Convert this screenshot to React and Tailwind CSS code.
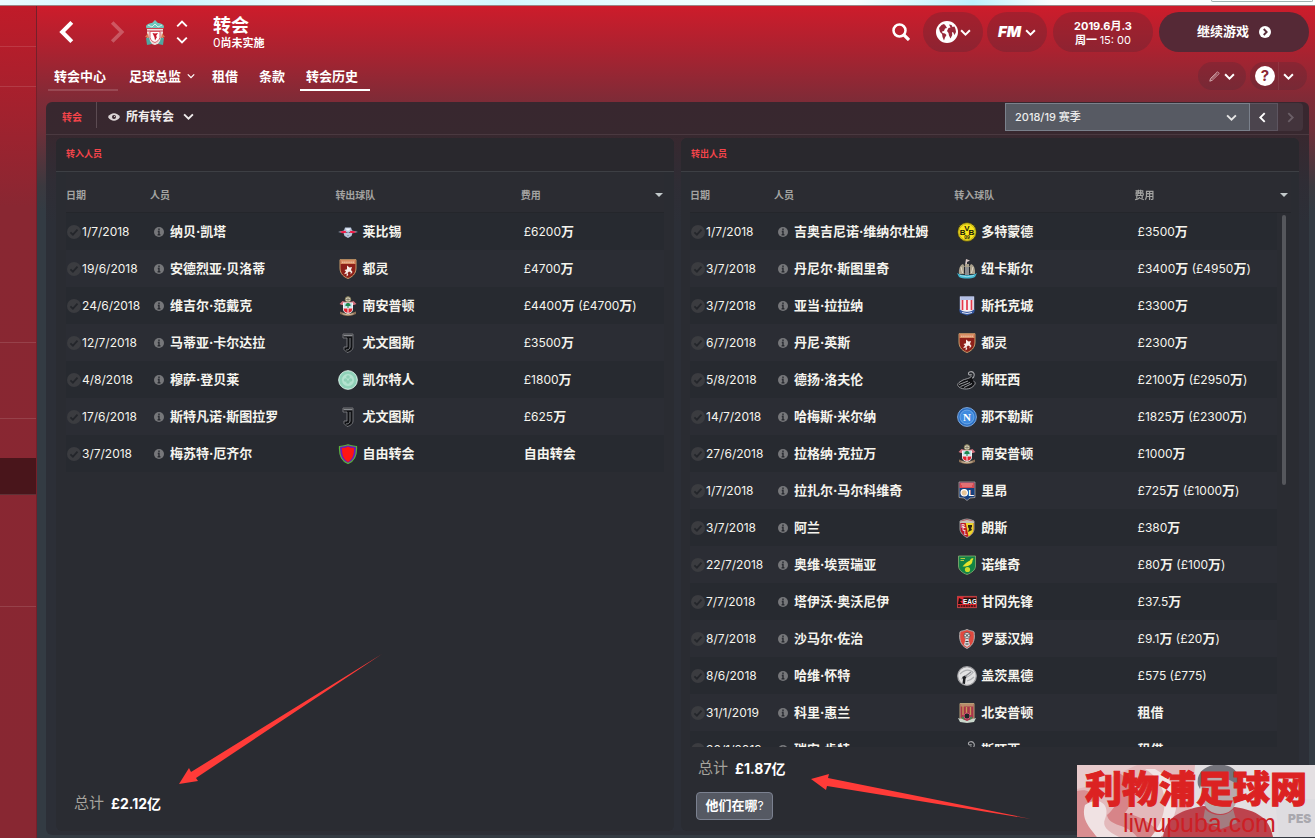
import React from "react";

/* ---------- icons ---------- */

function Chevron({ dir = "down", className = "w-[10px] h-[10px]", weight = 2 }) {
  const paths = {
    down: "M1 3l4 4 4-4",
    up: "M1 7l4-4 4 4",
    left: "M7 1L3 5l4 4",
    right: "M3 1l4 4-4 4",
  };
  return (
    <svg viewBox="0 0 10 10" className={className} fill="none" stroke="currentColor" strokeWidth={weight} aria-hidden="true">
      <path d={paths[dir]} />
    </svg>
  );
}

function CheckBadge() {
  return (
    <svg viewBox="0 0 14 14" className="h-[14px] w-[14px] shrink-0" aria-hidden="true">
      <circle cx="7" cy="7" r="7" fill="#3b3c40" />
      <path d="M3.4 7.4l2.5 2.3 4.6-5" fill="none" stroke="#24262b" strokeWidth="1.8" />
    </svg>
  );
}

function InfoBadge() {
  return (
    <svg viewBox="0 0 10 10" className="h-[10px] w-[10px] shrink-0" aria-hidden="true">
      <circle cx="5" cy="5" r="5" fill="#76777a" />
      <path d="M5 1.6v1.6M3.8 4.5h1.2v3.2M3.6 7.8h2.8" stroke="#292b31" strokeWidth="1.4" fill="none" />
    </svg>
  );
}

function LiverpoolCrest() {
  return (
    <svg viewBox="0 0 20 26" className="h-[26px] w-[20px]" aria-hidden="true">
      <path d="M1 7c0-3 4-4 6-4l3-3 3 3c2 0 6 1 6 4l-1 2H2z" fill="#6fc7bd" />
      <path d="M3 5l4 2 3-3 3 3 4-2" stroke="#d8efe9" fill="none" />
      <path d="M2 8h16v11c-2 5-6 5-8 6-3-1-6-1-8-6z" fill="#eedddb" />
      <path d="M2 8.500h16M2 11h16" stroke="#cf4350" />
      <path d="M5 11.500h10v6c-1 3-3 4-5 5-3-1-4-2-5-5z" fill="#fff" stroke="#d23a49" strokeWidth=".8" />
      <path d="M7.500 13l2.500.6 3-.6-2 3 1 1-2 3.500-.6-3.500z" fill="#c5182b" />
      <path d="M1 18l3-1 1 4 2 3-5 1zM19 18l-3-1-1 4-2 3 5 1z" fill="#4fa79f" />
      <path d="M0 17l3-4 1 5zM20 17l-3-4-1 5z" fill="#d97b52" />
    </svg>
  );
}

function CrestFrame({ children }) {
  return (
    <svg viewBox="0 0 20 20" className="h-[20px] w-[20px] shrink-0" fontFamily="Liberation Sans, sans-serif" fontWeight="bold" textAnchor="middle" aria-hidden="true">
      {children}
    </svg>
  );
}

const crests = {
  leipzig: (
    <CrestFrame>
      <path d="M0 10l6-1.500L7 5.500h6l1 3 6 1.500-5.500 1-1 3-3.500 2-3.500-2-1-3z" fill="#b9c6dc" />
      <path d="M2 9.600l5.500-.8 1 2-4.500.4zM18 9.600l-5.500-.8-1 2 4.500.4z" fill="#f01a45" />
      <path d="M7.500 6.500h5l-1.500 2H9z" fill="#eef3fa" />
      <path d="M8.500 10.500h.8M10.800 10.500h.8" stroke="#283046" />
      <path d="M9 13h2l-1 1.500z" fill="#7c8aa2" />
    </CrestFrame>
  ),
  torino: (
    <CrestFrame>
      <path d="M2 .7h16v8.300c0 6-4 9-8 10.500C6 18 2 15 2 9z" fill="#8d2019" stroke="#c99d6a" />
      <path d="M2.500 1h15v4h-15z" fill="#d98c62" />
      <path d="M4 3.200h12" stroke="#f1cfb2" strokeDasharray="1.500 .6" />
      <path d="M9 6.500l2.500 2L14 8l-1 3 1.500 2-2 2.500.3-2.300-1.800-.7-1.500 1.500.8 2-1.800 1.500.3-3-2.800.8L8 12.500 6.500 11l2.500-.8z" fill="#f8efe9" />
    </CrestFrame>
  ),
  southampton: (
    <CrestFrame>
      <circle cx="10" cy="3.400" r="2.700" fill="#e4ddc8" stroke="#8a815c" />
      <path d="M10 1.500v3.800M8 3.400h4" stroke="#55503e" strokeWidth=".6" />
      <path d="M1.500 8l3-3 3.500 1h4l3.500-1 3 3-2.500 1h-12z" fill="#d0707c" />
      <path d="M5 6.500h10V13c0 3-3 4.500-5 5.500-2-1-5-2.500-5-5.500z" fill="#f3f5f6" />
      <path d="M6 7h8v4.500H6z" fill="#bfe3ec" />
      <path d="M10 6.800c2 .6 3 2 2.500 3.200h-2v2h-1v-2h-2C7 8.800 8 7.400 10 6.800z" fill="#1f874e" />
      <path d="M5.500 12.500h4v4.500l-3-1.500zM14.500 12.500h-4v4.500l3-1.500z" fill="#e0222f" />
      <path d="M2 15.500l3 1q5 2.500 10 0l3-1v2.500l-4 1.500q-4 1-8 0l-4-1.500z" fill="#8a6f55" />
      <path d="M4.500 17.800q5.500 2 11 0" stroke="#e3d3b4" strokeWidth=".8" fill="none" />
    </CrestFrame>
  ),
  juventus: (
    <CrestFrame>
      <path d="M5 1h10v13c0 3-3 5-6 5.500l-3-3V14h3V5H5z" fill="#101114" stroke="#85878b" strokeWidth=".8" />
      <path d="M5.500 2.500h9" stroke="#8a8c90" strokeWidth="1.600" />
      <path d="M12 5v9c0 2-2 3-4 3" fill="none" stroke="#9c9ea2" strokeWidth=".8" />
    </CrestFrame>
  ),
  celtic: (
    <CrestFrame>
      <circle cx="10" cy="10" r="9.300" fill="#8fd2b9" stroke="#d9f3e8" />
      <circle cx="10" cy="10" r="6.500" fill="#b4e3d0" stroke="#8fcfb5" strokeWidth=".8" />
      <g fill="#8fd0b6">
        <circle cx="10" cy="7" r="1.800" />
        <circle cx="7.500" cy="10" r="1.800" />
        <circle cx="12.500" cy="10" r="1.800" />
        <circle cx="10" cy="12" r="1.800" />
      </g>
    </CrestFrame>
  ),
  free: (
    <CrestFrame>
      <path d="M1.500 2.500Q7 2 10 .8q3 1.200 8.500 1.700c.5 9-2 14.500-8.500 17C3.500 17 1 11.500 1.500 2.500z" fill="#6b1fb8" stroke="#59b23b" strokeWidth="1.200" />
      <path d="M4 4q4 0 6-1.500Q12 4 16 4c.2 7.500-2 11.700-6 13.900C6 15.700 3.800 11.500 4 4z" fill="#ff1512" />
    </CrestFrame>
  ),
  dortmund: (
    <CrestFrame>
      <circle cx="10" cy="10" r="9.400" fill="#f9e41c" stroke="#2d2b12" strokeWidth=".8" />
      <circle cx="10" cy="10" r="8.200" fill="none" stroke="#8a7f14" strokeWidth=".5" />
      <text x="5.600" y="12.800" fontSize="8" fill="#15150d">B</text>
      <text x="10" y="9.400" fontSize="8" fill="#15150d">V</text>
      <text x="14.400" y="12.800" fontSize="8" fill="#15150d">B</text>
      <text x="10" y="17" fontSize="5" fill="#15150d">09</text>
    </CrestFrame>
  ),
  newcastle: (
    <CrestFrame>
      <path d="M9 0l4 1.500L10 3v3H8z" fill="#d8c7c5" />
      <path d="M2 15c-.5-5 1-9 4-10l2 3V5h4v3l2-3c3 1 4.500 5 4 10z" fill="#a9a08c" />
      <path d="M7 8h6v6c-1 2-2 2-3 3-1-1-2-1-3-3z" fill="#24262b" />
      <path d="M9 8v8M11 8v8" stroke="#f5f5f5" />
      <path d="M0 14c4 3 16 3 20 0l-2 4c-4 2-12 2-16 0z" fill="#41b7d0" />
      <path d="M3 16.500q7 2.500 14 0" stroke="#bfe8f0" strokeWidth=".7" fill="none" />
      <path d="M4 8l1.500 6M16 8l-1.500 6" stroke="#e4dccb" />
    </CrestFrame>
  ),
  stoke: (
    <CrestFrame>
      <path d="M3 .5h14V14l-2 2H5l-2-2z" fill="#f7f1f3" stroke="#8b98c2" strokeWidth=".6" />
      <path d="M5.500 4v10M10 4v10M14.500 4v10" stroke="#e4394b" strokeWidth="1.700" />
      <path d="M3.500 1h13v3h-13z" fill="#b3bfe4" />
      <path d="M2 13c3 2 5 3 8 3s5-1 8-3l-1 4-7 2.500L3 17z" fill="#3457a2" />
      <path d="M5 16.500q5 2 10 0" stroke="#dfe6f5" fill="none" />
    </CrestFrame>
  ),
  swansea: (
    <CrestFrame>
      <path d="M12.500 9.500c4-1 5.500-3.500 4.500-6-1.500-3-6-2-5.500.5.500 1.500 2.500 1 3 .3" fill="none" stroke="#a6a7aa" strokeWidth="1.100" />
      <path d="M14 5.500c1 2.500-4 3-8 4.500L2 12.500c-2 2-1.500 3 0 4.500 4 3 11 2.500 14-.5 3-2.500 2.500-4.500.5-5.500" fill="#101114" stroke="#a6a7aa" strokeWidth=".9" />
      <path d="M2 14.500l9-3.500M3.500 16.500l9.500-4M7 17.500l8-4" stroke="#bdbec1" strokeWidth=".8" />
    </CrestFrame>
  ),
  napoli: (
    <CrestFrame>
      <circle cx="10" cy="10" r="9.400" fill="#2a6fc4" stroke="#7fa8dc" />
      <circle cx="10" cy="10" r="7" fill="#3e8bdf" stroke="#83b6ec" strokeWidth=".7" />
      <text x="10" y="13.800" fontSize="11" fill="#fff" fontFamily="Liberation Serif, serif">N</text>
    </CrestFrame>
  ),
  lyon: (
    <CrestFrame>
      <path d="M2 1h16v15.500l-5 .5-3 2.500L7 17l-5-.5z" fill="#17407e" stroke="#d6c9ba" strokeWidth=".6" />
      <path d="M2.500 1.500h15V7h-15z" fill="#d94a51" />
      <path d="M4 3h12M5 5h10" stroke="#f0aaa7" strokeWidth=".8" />
      <circle cx="7.200" cy="11.800" r="3.200" fill="#e7c79a" stroke="#fff" strokeWidth="1.200" />
      <text x="14.200" y="15.300" fontSize="9.500" fill="#fff">L</text>
    </CrestFrame>
  ),
  lens: (
    <CrestFrame>
      <path d="M3 3q4-2 7-2t7 2v8c0 4-4 7-7 8.500C7 18 3 15 3 11z" fill="#bd1823" stroke="#9b9b9b" />
      <path d="M8.500 4H16.500v7c0 4-3 6-5 7.500z" fill="#ecd42b" />
      <path d="M3 3.500q7-3 14 0V5H3z" fill="#c4bfb5" />
      <path d="M11 7h4v2l-1 1 1 2-4 2 1-3-1-2z" fill="#292512" />
      <text x="6" y="9.500" fontSize="4.500" fill="#fff">R</text>
      <text x="7" y="13" fontSize="4.500" fill="#fff">C</text>
      <text x="8.600" y="16.500" fontSize="4.500" fill="#fff">L</text>
    </CrestFrame>
  ),
  norwich: (
    <CrestFrame>
      <path d="M1.500 1h17v10c0 4-4 7-8.500 8.500C5.500 18 1.500 15 1.500 11z" fill="#128445" stroke="#8cae72" strokeWidth=".8" />
      <path d="M16.500 3.500c-2-.8-3 .5-3.500 2-2.500 1-5 3-7.500 6 3 .2 4.500-.3 6.500-1 2.500-1 3.500-3 3.500-5z" fill="#e5e32d" />
      <circle cx="10.500" cy="14.500" r="2.600" fill="#c9dc29" />
      <path d="M3.500 3.500h4.500M3.500 5.500h3.500" stroke="#b9cc3f" />
    </CrestFrame>
  ),
  eagles: (
    <CrestFrame>
      <path d="M0 4h20v12H0z" fill="#e1272e" />
      <path d="M6.500 5.500h13v6.500h-13z" fill="#1b1110" />
      <path d="M2 6l4 2-3 1.500L6 12H1z" fill="#1b1110" />
      <text x="13" y="11.600" fontSize="6.400" fill="#fff">EAG</text>
      <path d="M1 14h18" stroke="#2b1110" strokeWidth="1.600" strokeDasharray="2 .6" />
      <path d="M.3 4.300h19.400v11.400H.3z" fill="none" stroke="#8f5a58" strokeWidth=".6" />
    </CrestFrame>
  ),
  rotherham: (
    <CrestFrame>
      <path d="M10 .5C13 2 17 2 17 3c1 7 0 13-7 16.500C3 16 2 10 3 3c0-1 4-1 7-2.500z" fill="#e0493f" stroke="#b3b3b3" />
      <path d="M7 8l1.500 2L7 16l3 2 3-2-1.500-6L13 8z" fill="#d5d6d8" />
      <circle cx="10" cy="6.500" r="3" fill="#efefef" stroke="#474747" strokeWidth=".8" />
      <path d="M8.500 5l3 3M11.500 5l-3 3" stroke="#2f2f2f" strokeWidth=".9" />
      <path d="M8.500 12.500h3M8.500 15h3" stroke="#3d3d3d" />
    </CrestFrame>
  ),
  gateshead: (
    <CrestFrame>
      <circle cx="10" cy="10" r="9.300" fill="#e2e2e3" stroke="#9d9da0" strokeWidth="1.200" />
      <path d="M3 8c4-4 9-5 13-2M4 13c6-1 10-4 12.500-7M10 15q4-1 7-4" stroke="#aeb0b3" strokeWidth="1.100" fill="none" />
      <path d="M5.500 17.500l.5-4-.8-2.500 2.800-1.500 1.500 1-1 2.500-.5 5z" fill="#1b1d21" />
      <path d="M8 10.500l6-4.500" stroke="#85878c" strokeWidth="1.300" />
    </CrestFrame>
  ),
  northampton: (
    <CrestFrame>
      <path d="M3 .5h14V15l-7 4-7-4z" fill="#a93549" stroke="#b59f76" />
      <path d="M3.500 1h13v2.500h-13z" fill="#b98a6b" />
      <path d="M6 3v9M9.500 4v6M13.500 4v8" stroke="#c79a5a" strokeWidth="1.300" />
      <circle cx="10" cy="13" r="3" fill="#1c2726" stroke="#c94f74" />
      <path d="M1 15l4 1 5 2 5-2 4-1-2 4-7 1-7-1z" fill="#c9d6cb" />
      <path d="M5 14l2 2M15 14l-2 2" stroke="#319657" strokeWidth="1.500" />
    </CrestFrame>
  ),
};

/* ---------- data ---------- */

const arrivals = [
  ["1/7/2018", "纳贝·凯塔", "leipzig", "莱比锡", "£6200万"],
  ["19/6/2018", "安德烈亚·贝洛蒂", "torino", "都灵", "£4700万"],
  ["24/6/2018", "维吉尔·范戴克", "southampton", "南安普顿", "£4400万 (£4700万)"],
  ["12/7/2018", "马蒂亚·卡尔达拉", "juventus", "尤文图斯", "£3500万"],
  ["4/8/2018", "穆萨·登贝莱", "celtic", "凯尔特人", "£1800万"],
  ["17/6/2018", "斯特凡诺·斯图拉罗", "juventus", "尤文图斯", "£625万"],
  ["3/7/2018", "梅苏特·厄齐尔", "free", "自由转会", "自由转会"],
];

const departures = [
  ["1/7/2018", "吉奥吉尼诺·维纳尔杜姆", "dortmund", "多特蒙德", "£3500万"],
  ["3/7/2018", "丹尼尔·斯图里奇", "newcastle", "纽卡斯尔", "£3400万 (£4950万)"],
  ["3/7/2018", "亚当·拉拉纳", "stoke", "斯托克城", "£3300万"],
  ["6/7/2018", "丹尼·英斯", "torino", "都灵", "£2300万"],
  ["5/8/2018", "德扬·洛夫伦", "swansea", "斯旺西", "£2100万 (£2950万)"],
  ["14/7/2018", "哈梅斯·米尔纳", "napoli", "那不勒斯", "£1825万 (£2300万)"],
  ["27/6/2018", "拉格纳·克拉万", "southampton", "南安普顿", "£1000万"],
  ["1/7/2018", "拉扎尔·马尔科维奇", "lyon", "里昂", "£725万 (£1000万)"],
  ["3/7/2018", "阿兰", "lens", "朗斯", "£380万"],
  ["22/7/2018", "奥维·埃贾瑞亚", "norwich", "诺维奇", "£80万 (£100万)"],
  ["7/7/2018", "塔伊沃·奥沃尼伊", "eagles", "甘冈先锋", "£37.5万"],
  ["8/7/2018", "沙马尔·佐治", "rotherham", "罗瑟汉姆", "£9.1万 (£20万)"],
  ["8/6/2018", "哈维·怀特", "gateshead", "盖茨黑德", "£575 (£775)"],
  ["31/1/2019", "科里·惠兰", "northampton", "北安普顿", "租借"],
  ["30/1/2019", "瑞安·肯特", "swansea", "斯旺西", "租借"],
];

/* Latin runs are set lighter and smaller than the Chinese characters beside them. */
function Amount({ children }) {
  return children.split(/([\u4e00-\u9fff]+)/).map((part, i) =>
    i % 2 ? (
      <span key={i}>{part}</span>
    ) : (
      <span key={i} className="text-[12px] font-normal">{part}</span>
    )
  );
}

function TransferTable({ label, teamHeading, rows, gutter }) {
  const stripe = (i) => (i % 2 ? "bg-[#2b2d34]" : "bg-[#272a30]");
  const head = "sticky top-0 z-10 h-[41px] border-b border-[#24262b] bg-[#2b2c32] pt-[6px] text-left text-[10px] font-bold text-[#a3a3a1]";
  return (
    <table aria-label={label} className="w-full table-fixed border-separate border-spacing-0">
      <colgroup>
        <col className="w-[84px]" />
        <col className={gutter ? "w-[30%]" : "w-[31%]"} />
        <col className={gutter ? "w-[30%]" : "w-[31%]"} />
        <col />
        <col className={gutter ? "w-[14px]" : "w-[10px]"} />
      </colgroup>
      <thead>
        <tr>
          <th scope="col" className={head}>日期</th>
          <th scope="col" className={head}>人员</th>
          <th scope="col" className={head}>{teamHeading}</th>
          <th scope="col" className={head}>费用</th>
          <th className={head}>
            <button type="button" aria-label="排序" className="flex w-full justify-center">
              <svg viewBox="0 0 8 4" className="h-[4px] w-[8px]" aria-hidden="true"><path d="M0 0h8L4 4z" fill="#c3cacb" /></svg>
            </button>
          </th>
        </tr>
      </thead>
      <tbody className="text-[13px] text-[#f5f4ee]">
        {rows.map(([date, name, crest, team, fee], i) => (
          <tr key={name}>
            <td className={`h-[37px] p-0 ${stripe(i)}`}>
              <div className="flex items-center gap-px whitespace-nowrap pl-px text-[12px]">
                <CheckBadge />
                {date}
              </div>
            </td>
            <td className={`p-0 ${stripe(i)}`}>
              <div className="flex items-center gap-1.5 whitespace-nowrap pl-1 font-bold">
                <InfoBadge />
                {name}
              </div>
            </td>
            <td className={`p-0 ${stripe(i)}`}>
              <div className="flex items-center gap-1 whitespace-nowrap pl-[3px] font-bold">
                {crests[crest]}
                {team}
              </div>
            </td>
            <td className={`whitespace-nowrap p-0 pl-[3px] font-bold ${stripe(i)}`}>
              <Amount>{fee}</Amount>
            </td>
            <td className={gutter ? "p-0" : `p-0 ${stripe(i)}`} />
          </tr>
        ))}
      </tbody>
    </table>
  );
}

function Panel({ title, children }) {
  return (
    <section className="relative flex min-w-0 flex-1 flex-col rounded-[6px] bg-[#2a2c32]">
      <h2 className="flex h-[34px] shrink-0 items-center rounded-t-[6px] border-b border-[#3d3f44] bg-[#29282d] px-[10px] pb-[2px] text-[9px] font-bold text-[#f4444a]">
        {title}
      </h2>
      {children}
    </section>
  );
}

function Total({ value }) {
  return (
    <p className="flex h-[22px] items-center gap-[7px] text-[15px] text-[#a5a39d]">
      总计 <strong className="text-[14px] text-white">{value}</strong>
    </p>
  );
}

function Sidebar() {
  const item = "block w-full shrink-0 border-b border-[#ffffff1f]";
  return (
    <nav aria-label="主菜单" className="flex w-[37px] shrink-0 flex-col border-r border-[#74202b] bg-[linear-gradient(#c01b29_0px,#a9202d_80px,#892732_200px,#882732_100%)]">
      <a href="#home" aria-label="主页" className={`${item} h-[41px]`} />
      <a href="#inbox" aria-label="收件箱" className={`${item} h-[40px]`} />
      <a href="#squad" aria-label="阵容" className={`${item} h-[256px]`} />
      <a href="#club" aria-label="俱乐部" className={`${item} h-[76px]`} />
      <a href="#staff" aria-label="职员" className="block h-[39px] w-full shrink-0" />
      <a href="#transfers" aria-label="转会" aria-current="page" className={`${item} h-[37px] bg-[#49151b]`} />
      <a href="#finance" aria-label="财政" className={`${item} h-[112px]`} />
    </nav>
  );
}

function TopBar() {
  const pill = "flex items-center justify-center rounded-full bg-[#3a283540] text-white";
  return (
    <div className="flex h-[52px] items-center justify-between pl-[10px] text-white">
      <div className="flex items-center">
        <button type="button" aria-label="后退" className="flex w-[40px] justify-center">
          <Chevron dir="left" className="h-[24px] w-[24px]" weight={1.700} />
        </button>
        <button type="button" aria-label="前进" className="ml-[10px] flex w-[40px] justify-center text-[#ffffff40]">
          <Chevron dir="right" className="h-[24px] w-[24px]" weight={1.500} />
        </button>
        <span className="ml-2 pt-px"><LiverpoolCrest /></span>
        <div className="ml-[7px] flex w-[20px] flex-col items-center gap-[4px]">
          <button type="button" aria-label="上一个"><Chevron dir="up" className="h-[12px] w-[12px]" weight={1.600} /></button>
          <button type="button" aria-label="下一个"><Chevron className="h-[12px] w-[12px]" weight={1.600} /></button>
        </div>
        <div className="ml-[21px] pt-px">
          <h1 className="text-[18px] font-bold leading-[20px]">转会</h1>
          <p className="text-[11px] font-bold leading-[13px]"><Amount>0尚未实施</Amount></p>
        </div>
      </div>
      <div className="flex items-center">
        <button type="button" aria-label="搜索" className="mr-[7px] flex w-[30px] justify-center">
          <svg viewBox="0 0 18 18" className="h-[18px] w-[18px]" fill="none" stroke="currentColor" aria-hidden="true">
            <circle cx="7.500" cy="7.500" r="6" strokeWidth="2.500" />
            <path d="M12 12l5 5" strokeWidth="3.200" />
          </svg>
        </button>
        <button type="button" aria-label="世界" className={`${pill} mr-1 h-[40px] w-[60px] gap-[2px]`}>
          <svg viewBox="0 0 22 22" className="h-[22px] w-[22px]" aria-hidden="true">
            <circle cx="11" cy="11" r="11" fill="#fff" />
            <path d="M3 7l2.500-3L8 3l1.500 1.500L11 7 9 7.500 8 10l-2 .5.500 1.500 2.500.5L10.500 14l-1.500 2.500-1 3-1.500-3.500-.5-3-2-2zM13 3.500l2.500.5 1 2 2-.5L19.500 8l.5 3-1.500 3-1.500-3-1 .5.300 2.500-1.800 3.500-1.500-3-.5-2.500-1.500-2L12.500 7l2-.5z" fill="#98283a" />
          </svg>
          <Chevron className="h-[11px] w-[11px]" weight={1.800} />
        </button>
        <button type="button" className={`${pill} mr-1.5 h-[40px] w-[60px] gap-1 text-[15px] font-black italic`}>
          FM
          <Chevron className="h-[11px] w-[11px]" weight={1.800} />
        </button>
        <button type="button" className={`${pill} mr-1.5 h-[40px] w-[100px] flex-col pt-px text-[11px] font-bold leading-[14px]`}>
          <span>2019.6月.3</span>
          <span>周一 <span className="font-normal">15: 00</span></span>
        </button>
        <button type="button" className="flex h-[40px] w-[150px] items-center justify-center gap-[10px] rounded-full bg-[#552936] text-[13px] font-bold">
          继续游戏
          <svg viewBox="0 0 12 12" className="h-[12px] w-[12px]" aria-hidden="true">
            <circle cx="6" cy="6" r="6" fill="#fff" />
            <path d="M4.700 3l3 3-3 3" fill="none" stroke="#552936" strokeWidth="1.800" />
          </svg>
        </button>
      </div>
    </div>
  );
}

function Tabs() {
  const tab = "flex h-[28px] items-start border-b-2 pl-[6px] pt-[4px]";
  return (
    <div className="flex h-[44px] items-start justify-between pl-[11px] pr-[2px] text-[13px] font-bold text-white">
      <nav aria-label="转会页面" className="flex gap-[5px] pt-[5px] leading-[19px]">
        <a href="#centre" className={`${tab} min-w-[70px] border-[#ffffff26]`}>转会中心</a>
        <a href="#director" className={`${tab} gap-[6px] border-transparent pr-[6px]`}>
          足球总监 <Chevron className="mt-[5px] h-[8px] w-[8px]" weight={1.600} />
        </a>
        <a href="#loans" className={`${tab} border-transparent pr-[10px]`}>租借</a>
        <a href="#clauses" className={`${tab} border-transparent pr-[10px]`}>条款</a>
        <a href="#history" aria-current="page" className={`${tab} min-w-[70px] border-white`}>转会历史</a>
      </nav>
      <div className="flex gap-1 pt-1">
        <button type="button" aria-label="编辑" className="flex h-[28px] w-[48px] items-center justify-center gap-1 rounded-full bg-[#3a283538]">
          <svg viewBox="0 0 11 11" className="h-[11px] w-[11px]" fill="none" stroke="#e3c6c9" strokeWidth=".8" aria-hidden="true">
            <path d="M.8 10.200l.7-2.700L8.500.8l1.700 1.700-7 6.800zM2 8.500l6-6" />
          </svg>
          <Chevron className="h-[11px] w-[11px]" weight={1.800} />
        </button>
        <div className="flex h-[28px] w-[57px] items-center rounded-full bg-[#3a283538]">
          <button type="button" aria-label="帮助" className="flex h-full w-[29px] items-center justify-end border-r border-[#ffffff12] pr-[3px]">
            <span className="flex h-[20px] w-[20px] items-center justify-center rounded-full bg-white text-[15px] text-[#8a2634]">?</span>
          </button>
          <button type="button" aria-label="帮助选项" className="flex flex-1 pl-1">
            <Chevron className="h-[11px] w-[11px]" weight={1.800} />
          </button>
        </div>
      </div>
    </div>
  );
}

function FilterBar() {
  return (
    <div className="flex h-[33px] shrink-0 items-start justify-between border-b border-[#4a3940] pl-4 pr-[6px]">
      <div className="flex items-center">
        <span className="pr-[14px] pt-[4px] text-[10px] font-bold text-[#f4444a]">转会</span>
        <button type="button" aria-haspopup="menu" className="flex h-[26px] items-center gap-[6px] border-l border-[#5c4b52] pl-[11px] pt-[3px] text-[12px] font-bold text-[#f0ecec]">
          <svg viewBox="0 0 12 8" className="h-[8px] w-[12px]" aria-hidden="true">
            <path d="M0 4c3-5 9-5 12 0-3 5-9 5-12 0z" fill="#dcd5d6" />
            <circle cx="6" cy="4" r="2" fill="#38272f" />
            <circle cx="6.500" cy="3.500" r=".6" fill="#dcd5d6" />
          </svg>
          所有转会
          <Chevron className="ml-[3px] h-[11px] w-[11px]" weight={1.700} />
        </button>
      </div>
      <div className="flex pt-px">
        <div className="relative">
          <select aria-label="赛季" defaultValue="2018/19 赛季" className="h-[28px] w-[245px] appearance-none border border-[#7a818c] bg-[#575a63] pl-[9px] pr-6 text-[11px] font-medium text-[#eceded] outline-none">
            <option>2018/19 赛季</option>
          </select>
          <span className="pointer-events-none absolute right-[13px] top-[9px] text-[#e6e6e6]">
            <Chevron className="h-[11px] w-[11px]" weight={1.700} />
          </span>
        </div>
        <button type="button" aria-label="上一赛季" className="flex h-[28px] w-[28px] items-center justify-center border-y border-r border-[#5d5560] bg-[#4b444d] pr-[2px] text-white">
          <Chevron dir="left" className="h-[11px] w-[11px]" weight={1.700} />
        </button>
        <button type="button" aria-label="下一赛季" disabled className="flex h-[28px] w-[25px] items-center justify-center rounded-r-[4px] bg-[#43343c] text-[#6b5f67]">
          <Chevron dir="right" className="h-[11px] w-[11px]" weight={1.700} />
        </button>
      </div>
    </div>
  );
}

function Watermark() {
  return (
    <aside className="absolute bottom-px right-0 z-20 h-[72px] w-[238px] overflow-hidden bg-[#e3dfe2] text-[#dc2222]">
      <svg viewBox="0 0 238 72" className="absolute inset-0 h-full w-full" aria-hidden="true">
        <path d="M0 0h118l-6 72H0z" fill="#e3b9bb" />
        <path d="M0 0h60C45 6 30 16 8 22L0 24z" fill="#e8cbcc" />
        <path d="M0 26c16-4 20 8 14 22-4 8 0 16 6 24H0z" fill="#d98e91" />
        <path d="M8 40c14-10 26 0 20 14-3 7 2 12 14 18H20C12 62 4 54 8 40z" fill="#f0e2e3" />
        <path d="M36 6c18 4 26 24 12 42 14 2 30 12 38 24H60C50 58 32 62 30 50 44 38 46 22 36 6z" fill="#d78488" />
        <path d="M68 4c24 14 26 44 6 68h10c20-22 24-52-6-68z" fill="#f0e4e5" />
        <path d="M86 72c3-22 20-27 40-31l32 1c24 4 34 12 38 30z" fill="#bd434d" />
        <path d="M124 16c0-14 34-16 36 0v18c-3 20-30 20-35 0z" fill="#b9abad" />
        <path d="M121 20c-5-26 44-28 41-2l-3 2c-4-8-28-10-34-4l-2 8z" fill="#74747c" />
        <path d="M128 44c8 8 22 8 28 0l4 14-16 6-18-8z" fill="#a37c80" />
        <path d="M198 34h40v38h-36z" fill="#dedce0" />
      </svg>
      <div className="relative flex flex-col items-center">
        <strong className="whitespace-nowrap pt-[2px] text-[37px] font-black leading-[45px] [-webkit-text-stroke:1px_#dc2222]">利物浦足球网</strong>
        <span className="pl-[7px] font-['Liberation_Sans',sans-serif] text-[25px] leading-[22px] text-[#cc1f25]">liwupuba.com</span>
      </div>
      <span className="absolute bottom-[9px] left-[211px] text-[12px] font-black text-[#a9a8ae]">PES</span>
    </aside>
  );
}

export default function App() {
  return (
    <div className="relative flex h-screen flex-col overflow-hidden bg-[#333a42] font-['Inter','Noto_Sans_CJK_SC',sans-serif]">
      <div className="relative h-[6px] shrink-0 border-b border-[#9b8585] bg-[linear-gradient(90deg,#eafcff,#c8f4fd_12%,#f4feff_25%,#d3f7fd_38%,#ecfdff_50%,#f7ffff_65%,#bdf1fc_74%,#fafefe_80%)]">
        <div className="absolute right-[2px] top-0 flex h-[2px] w-[102px] rounded-b-[3px] border border-t-0 border-[#9fb0b0]" />
      </div>
      <div className="flex min-h-0 flex-1">
        <Sidebar />
        <main className="flex min-w-0 flex-1 flex-col bg-[linear-gradient(#cd1c2b_0px,#ab2230_44px,#7f2b37_94px,#6e2f39_125px,#3b393f_180px,#333b43_205px)] pb-[3px] pr-[6px]">
          <TopBar />
          <Tabs />
          <div className="ml-[9px] flex min-h-0 flex-1 flex-col rounded-[6px] bg-[linear-gradient(#38272f_0px,#38282f_32px,#2f2d35_80px,#2c2f37_120px)]">
            <FilterBar />
            <div className="flex min-h-0 flex-1 gap-[7px] px-[10px] pb-1 pt-[3px]">
              <Panel title="转入人员">
                <div className="min-h-0 flex-1 overflow-hidden px-[10px]">
                  <TransferTable label="转入人员" teamHeading="转出球队" rows={arrivals} />
                </div>
                <div className="px-[18px] pb-[17px]">
                  <Total value="£2.12亿" />
                </div>
                <svg viewBox="0 0 204 131" className="pointer-events-none absolute bottom-[46px] left-[123px] h-[131px] w-[204px]" aria-hidden="true">
                  <path d="M0 130L10 114l2 4L203 0 17 124l2 3z" fill="#ff3b38" />
                </svg>
              </Panel>
              <Panel title="转出人员">
                <div className="min-h-0 flex-1 overflow-hidden pl-[9px] pr-[8px]">
                  <TransferTable label="转出人员" teamHeading="转入球队" rows={departures} gutter />
                </div>
                <span className="absolute right-[13px] top-[77px] h-[270px] w-[4px] rounded-full bg-[#55575c]" />
                <div className="px-[15px] pb-[11px] pt-[10px]">
                  <div className="pl-[2px]"><Total value="£1.87亿" /></div>
                  <button type="button" className="mt-[13px] h-[28px] w-[77px] rounded-[4px] border border-[#7b8190] bg-[#555963] text-[13px] font-bold text-white">
                    <Amount>他们在哪?</Amount>
                  </button>
                </div>
                <svg viewBox="0 0 221 46" className="pointer-events-none absolute bottom-[11px] left-[130px] h-[46px] w-[221px]" aria-hidden="true">
                  <path d="M0 5L18 0l-1 4L220 45 16 12l-1 4z" fill="#ff3b38" />
                </svg>
              </Panel>
            </div>
          </div>
        </main>
      </div>
      <Watermark />
    </div>
  );
}
